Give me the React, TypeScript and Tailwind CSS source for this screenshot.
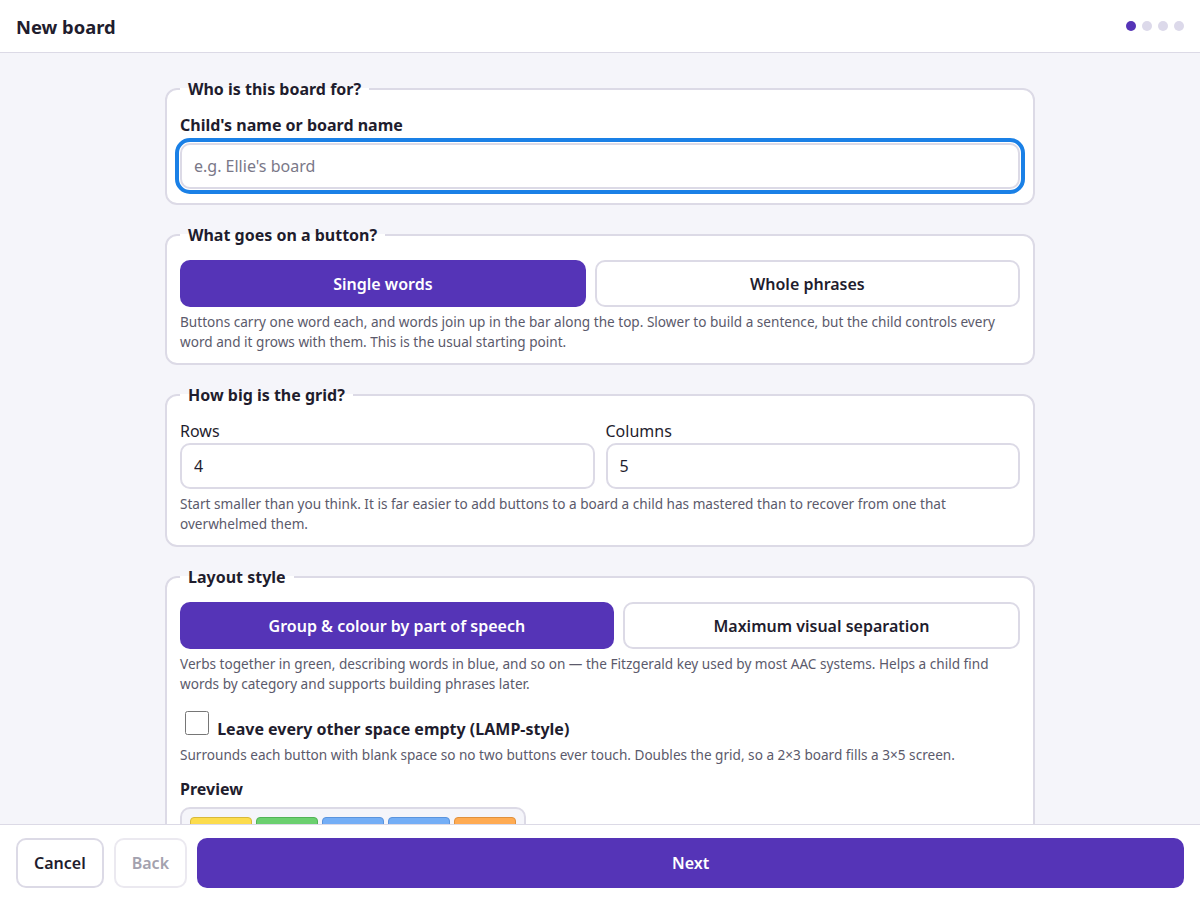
import React from "react";

const purple = "bg-[#5534b7]";

const Choice = ({ label, active }: { label: string; active?: boolean }) => (
  <button
    type="button"
    className={
      active
        ? "flex-auto h-[47px] rounded-[10px] bg-[#5534b7] text-white font-semibold text-base"
        : "flex-auto h-[47px] rounded-[10px] border-2 border-[#dcdae6] bg-white text-[#1f1d2e] font-semibold text-base"
    }
  >
    {label}
  </button>
);

const Help = ({ children, className = "mt-[5px]" }: { children: React.ReactNode; className?: string }) => (
  <p className={`text-[13.6px] leading-[19.5px] text-[#5b5a6b] ${className}`}>{children}</p>
);

const Section = ({
  title,
  children,
  bottom = "pb-3",
}: {
  title: string;
  children: React.ReactNode;
  bottom?: string;
}) => (
  <fieldset className={`border-2 border-[#dcdae6] rounded-xl bg-white px-[13px] pt-3 ${bottom}`}>
    <legend className="px-2 text-base leading-6 font-bold">{title}</legend>
    {children}
  </fieldset>
);

const previewRow = [
  "bg-[#fcdc4d] border-[#d8b93a]",
  "bg-[#6bd06f] border-[#52b356]",
  "bg-[#74aef6] border-[#5b94dd]",
  "bg-[#74aef6] border-[#5b94dd]",
  "bg-[#ffab52] border-[#e0913d]",
];

export default function App() {
  return (
    <div className="h-screen flex flex-col bg-[#f5f5fa] font-['Noto_Sans',sans-serif] text-[#1f1d2e]">
      {/* Header */}
      <header className="h-[53px] shrink-0 bg-white border-b border-[#dcdae6] flex items-center justify-between px-4">
        <h1 className="text-[18.4px] leading-7 font-bold pt-px">New board</h1>
        <div className="flex gap-1.5">
          <span className={`w-2.5 h-2.5 rounded-full ${purple}`} />
          <span className="w-2.5 h-2.5 rounded-full bg-[#dcd9ea]" />
          <span className="w-2.5 h-2.5 rounded-full bg-[#dcd9ea]" />
          <span className="w-2.5 h-2.5 rounded-full bg-[#dcd9ea]" />
        </div>
      </header>

      {/* Form */}
      <main className="flex-1 overflow-y-auto">
        <div className="w-[870px] mx-auto pt-6 pb-8 flex flex-col gap-[18px]">
          <Section title="Who is this board for?" bottom="pb-3.5">
            <label className="block font-bold leading-6 mb-1.5">Child's name or board name</label>
            <input
              type="text"
              placeholder="e.g. Ellie's board"
              className="w-full h-[46px] px-3 border-2 border-[#dcdae6] rounded-[10px] text-base placeholder:text-[#7a7888] outline-4 outline-[#1a80e6] outline-offset-1"
            />
          </Section>

          <Section title="What goes on a button?">
            <div className="flex gap-[9px] mt-px">
              <Choice label="Single words" active />
              <Choice label="Whole phrases" />
            </div>
            <Help>
              Buttons carry one word each, and words join up in the bar along the top. Slower to build a
              sentence, but the child controls every word and it grows with them. This is the usual starting
              point.
            </Help>
          </Section>

          <Section title="How big is the grid?">
            <div className="grid grid-cols-2 gap-[11px]">
              <div>
                <label className="block leading-6">Rows</label>
                <input
                  type="text"
                  defaultValue="4"
                  className="w-full h-[46px] px-3 border-2 border-[#dcdae6] rounded-[10px] text-base outline-none"
                />
              </div>
              <div>
                <label className="block leading-6">Columns</label>
                <input
                  type="text"
                  defaultValue="5"
                  className="w-full h-[46px] px-3 border-2 border-[#dcdae6] rounded-[10px] text-base outline-none"
                />
              </div>
            </div>
            <Help>
              Start smaller than you think. It is far easier to add buttons to a board a child has mastered
              than to recover from one that overwhelmed them.
            </Help>
          </Section>

          <Section title="Layout style">
            <div className="flex gap-[9px] mt-px">
              <Choice label="Group & colour by part of speech" active />
              <Choice label="Maximum visual separation" />
            </div>
            <Help>
              Verbs together in green, describing words in blue, and so on — the Fitzgerald key used by most
              AAC systems. Helps a child find words by category and supports building phrases later.
            </Help>

            <label className="block mt-[18px] font-bold leading-6">
              <input type="checkbox" className="w-6 h-6 ml-[5px] mr-1 align-baseline" /> Leave every other
              space empty (LAMP-style)
            </label>
            <Help className="mt-1">
              Surrounds each button with blank space so no two buttons ever touch. Doubles the grid, so a 2×3
              board fills a 3×5 screen.
            </Help>

            <p className="font-bold leading-6 mt-3">Preview</p>
            <div className="mt-1.5 inline-grid grid-cols-5 gap-1 p-2 border-2 border-[#dcdae6] rounded-[10px] bg-[#f5f5fa]">
              {Array.from({ length: 4 }).flatMap((_, r) =>
                previewRow.map((c, i) => (
                  <div key={`${r}-${i}`} className={`w-[62px] h-10 rounded border ${c}`} />
                ))
              )}
            </div>
          </Section>
        </div>
      </main>

      {/* Footer */}
      <footer className="shrink-0 bg-white border-t border-[#dcdae6] px-4 pt-[13px] pb-3 flex gap-2.5">
        <button
          type="button"
          className="h-[50px] px-4 rounded-[10px] border-2 border-[#dcdae6] bg-white font-semibold"
        >
          Cancel
        </button>
        <button
          type="button"
          disabled
          className="h-[50px] px-4 rounded-[10px] border-2 border-[#ebe9f0] bg-white font-semibold text-[#a3a1ae]"
        >
          Back
        </button>
        <button type="button" className={`flex-1 h-[50px] rounded-[10px] ${purple} text-white font-semibold`}>
          Next
        </button>
      </footer>
    </div>
  );
}
